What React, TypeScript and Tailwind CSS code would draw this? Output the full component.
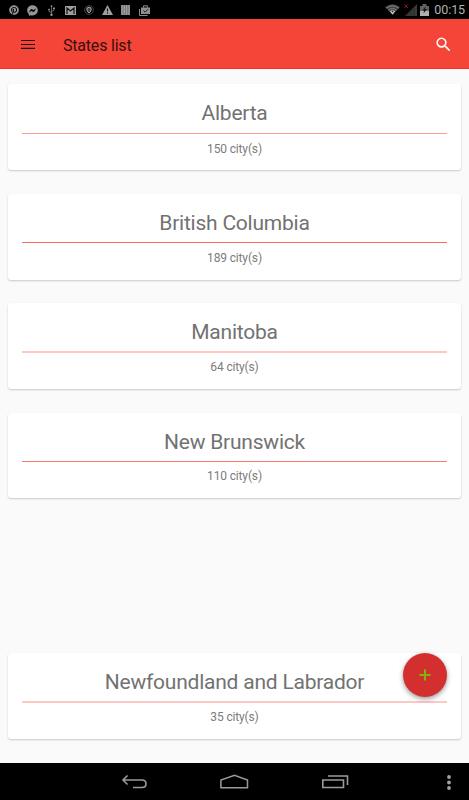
import React from 'react';
import { FaPinterest, FaFacebookMessenger, FaUsb } from 'react-icons/fa';
import { MdSearch } from 'react-icons/md';

interface State {
  name: string;
  cities: number;
  card: string;
  line: string;
  count: string;
}

const states: State[] = [
  { name: 'Alberta', cities: 150, card: 'mt-[15px] h-[86px]', line: 'mt-[6px] h-px bg-[#ff9c94]', count: 'mt-[7px]' },
  { name: 'British Columbia', cities: 189, card: 'mt-[24px] h-[86px]', line: 'mt-[5px] h-px bg-[#f86c60]', count: 'mt-[7px]' },
  { name: 'Manitoba', cities: 64, card: 'mt-[23px] h-[86px]', line: 'mt-[5px] h-[2px] bg-[#ffc6c4]', count: 'mt-[6px]' },
  { name: 'New Brunswick', cities: 110, card: 'mt-[24px] h-[85px]', line: 'mt-[5px] h-px bg-[#fa7a70]', count: 'mt-[6px]' },
  { name: 'Newfoundland and Labrador', cities: 35, card: 'mt-[155px] h-[86px]', line: 'mt-[5px] h-[2px] bg-[#ffc6c4]', count: 'mt-[6px]' },
];

const StatusBar: React.FC = () => (
  <div className="flex h-[19px] shrink-0 items-center justify-between bg-black pl-[9px] pr-[4px] text-[#969696]">
    <div className="flex items-center gap-[8px] pt-px">
      <FaPinterest className="h-[10px] w-[10px]" />
      <FaFacebookMessenger className="h-[11px] w-[11px]" />
      <FaUsb className="h-[11px] w-[11px] -rotate-90" />
      <svg className="h-[9px] w-[11px]" viewBox="0 0 11 9">
        <path d="M0 0h11v9H0z" fill="#a0a0a0" />
        <path d="M2 8V2l3.500 3L9 2v6" fill="none" stroke="#111" strokeWidth="1.200" />
      </svg>
      <svg className="h-[10px] w-[10px]" viewBox="0 0 10 10" fill="none">
        <circle cx="5" cy="5" r="4.300" stroke="#484848" />
        <path d="M3 3l2-.8L7 3v2.300Q6.700 7 5 7.800Q3.300 7 3 5.300z" fill="#444" stroke="#aaa" />
      </svg>
      <svg className="h-[10px] w-[11px]" viewBox="0 0 11 10">
        <path d="M5.500 0L11 10H0z" fill="#a0a0a0" />
        <path d="M5.500 3.500v3M5.500 7.500v1.200" stroke="#111" strokeWidth="1.100" />
      </svg>
      <svg className="h-[10px] w-[9px]" viewBox="0 0 9 10">
        <path d="M0 0h9v10H0z" fill="#777" />
        <path d="M1 0v10M3.300 0v10M5.700 0v10M8 0v10" stroke="#a5a5a5" />
      </svg>
      <svg className="ml-px h-[11px] w-[11px]" viewBox="0 0 11 11" fill="none">
        <path d="M.5 4v6.500h8" stroke="#888" />
        <path d="M2 2.500h9V9H2z" fill="#909090" />
        <path d="M4.500 2.500V.8h4v1.700" stroke="#909090" />
        <path d="M4.500 5.500l1.500 1.700 3-3" stroke="#222" />
      </svg>
    </div>
    <div className="flex items-center">
      <svg className="mr-[4px] h-[11px] w-[15px]" viewBox="0 0 15 11">
        <path d="M0 3Q7.500-2.500 15 3L7.500 11z" fill="#444" />
        <path d="M1.500 4Q7.500-.5 13.500 4M3.500 6.200Q7.500 3 11.500 6.200" fill="none" stroke="#858585" />
        <path d="M5 7.200Q7.500 5.200 10 7.200L7.500 10.500z" fill="#ddd" />
        <circle cx="7.500" cy="7.500" r="1" fill="#333" />
      </svg>
      <svg className="mr-[3px] h-[12px] w-[13px]" viewBox="0 0 13 12">
        <path d="M13 0v12H1z" fill="#3a3a3a" />
        <path d="M4 9v3M7 6v6M10 3v9" stroke="#222" strokeWidth=".6" />
        <path d="M.5 .5l3.500 3.500M4 .5L.5 4" stroke="#a01818" />
      </svg>
      <svg className="mr-[5px] h-[12px] w-[9px]" viewBox="0 0 9 12">
        <path d="M0 2h2.500V0h4v2H9v10H0z" fill="#606060" />
        <path d="M0 7h9v5H0z" fill="#b0b0b0" />
        <path d="M5.500 2.500L2.500 6.500h1.700L3.500 9.500l3.500-4.500H5z" fill="#161616" />
      </svg>
      <span className="text-[12.500px] leading-[19px] tracking-[-0.1px] text-[#b2b2b2]">00:15</span>
    </div>
  </div>
);

const StateCard: React.FC<{ state: State }> = ({ state }) => (
  <div
    className={`shrink-0 rounded-[3px] bg-white px-[14px] pt-[16px] text-center shadow-[0_1px_2px_rgba(0,0,0,0.2)] ${state.card}`}
  >
    <h2 className="h-[27px] text-[21px] leading-[27px] tracking-[-0.22px] text-[#727272]">{state.name}</h2>
    <div className={state.line} />
    <p className={`text-[12px] leading-[16px] tracking-[-0.15px] text-[#7c7c7c] ${state.count}`}>{state.cities} city(s)</p>
  </div>
);

const NavBar: React.FC = () => (
  <nav className="flex h-[37px] shrink-0 items-center bg-black pl-[121px] pr-[18px]">
    <svg className="h-[16px] w-[27px]" viewBox="0 0 27 16" fill="none" stroke="#9b9b9b" strokeWidth="1.600">
      <path d="M6.500 1.500L2 6l4.500 4.500M2 6h19q4 0 4 3.700T21 13.500h-9" />
    </svg>
    <svg className="ml-[72px] h-[16px] w-[29px]" viewBox="0 0 29 16" fill="none" stroke="#9b9b9b" strokeWidth="1.500">
      <path d="M.9 13.700V6l13.600-4.700L27.500 6v7.700z" />
    </svg>
    <svg className="ml-[73px] h-[16px] w-[27px]" viewBox="0 0 27 16" fill="none" stroke="#9b9b9b" strokeWidth="1.600">
      <path d="M.8 6h20.700v7.500H.8zM6 2h19.500v9" />
    </svg>
    <svg className="ml-auto h-[16px] w-[4px]" viewBox="0 0 4 16" fill="#a2a2a2">
      <circle cx="2" cy="3" r="1.900" />
      <circle cx="2" cy="8.500" r="1.900" />
      <circle cx="2" cy="14" r="1.900" />
    </svg>
  </nav>
);

const App: React.FC = () => {
  return (
    <div className="relative flex h-[800px] w-[469px] flex-col overflow-hidden bg-[#fafafa] font-[Roboto,sans-serif]">
      <StatusBar />
      <header className="flex h-[50px] shrink-0 items-center border-b border-[#f5321b] bg-[#f54438] pl-[21px] pr-[16px]">
        <svg className="h-[10px] w-[14px]" viewBox="0 0 14 10" stroke="#1c0504" strokeWidth="1.200">
          <path d="M0 1.500h14M0 5.500h14M0 9.400h14" />
        </svg>
        <h1 className="ml-[28px] pt-[4px] text-[16px] leading-[20px] tracking-[-0.2px] text-[#37110e]">States list</h1>
        <MdSearch className="ml-auto mt-[2px] h-[19px] w-[19px] text-white" />
      </header>

      <main className="flex flex-1 flex-col px-[8px]">
        {states.map((state) => (
          <StateCard key={state.name} state={state} />
        ))}
      </main>

      <button className="absolute left-[403px] top-[653px] flex h-[44px] w-[44px] items-center justify-center rounded-full bg-[#d32f2f] shadow-[0_2px_5px_rgba(0,0,0,0.4)]">
        <svg className="h-[12px] w-[12px]" viewBox="0 0 12 12" stroke="#7cb50c" strokeWidth="2">
          <path d="M6 .5v11M.5 6h11" />
        </svg>
      </button>
      <NavBar />
    </div>
  );
};

export default App;
